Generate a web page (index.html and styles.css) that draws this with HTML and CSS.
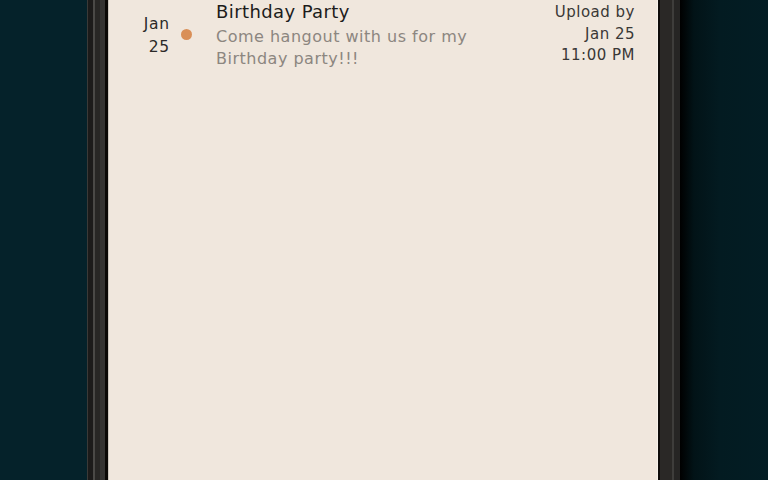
FILE: index.html
```html
<!DOCTYPE html>
<html>
<head>
<meta charset="utf-8">
<link rel="stylesheet" href="styles.css">
</head>
<body>
<div class="stage">
  <div class="side left"></div>
  <div class="phone">
    <div class="bezel bezel-left"></div>
    <div class="screen">
      <div class="event">
        <div class="date">
          <span>Jan</span>
          <span>25</span>
        </div>
        <div class="dot-col"><span class="dot"></span></div>
        <div class="info">
          <div class="title">Birthday Party</div>
          <div class="desc">Come hangout with us for my Birthday party!!!</div>
        </div>
        <div class="meta">
          <span>Upload by</span>
          <span>Jan 25</span>
          <span>11:00 PM</span>
        </div>
      </div>
    </div>
    <div class="bezel bezel-right"></div>
  </div>
  <div class="side right"></div>
</div>
</body>
</html>
```
FILE: styles.css
```css
html, body {
  margin: 0;
  padding: 0;
  width: 768px;
  height: 480px;
  overflow: hidden;
  background: #04212a;
}
.stage {
  display: flex;
  height: 480px;
}
.side.left {
  width: 87px;
  background: #05222a;
}
.side.right {
  flex: 1;
  background: linear-gradient(90deg, #000 0px, #021317 14px, #031b21 40px, #031d24 100%);
}
.phone {
  display: flex;
  width: 593px;
}
.bezel-left {
  width: 22px;
  background: linear-gradient(90deg,
    #3b3a38 0, #3b3a38 1px,
    #1c1b1a 1px, #1c1b1a 6px,
    #4a4946 6px, #4a4946 8px,
    #282725 8px, #282725 13px,
    #353432 13px, #353432 18px,
    #0b0906 18px, #0b0906 21px,
    #cfc8bf 21px, #cfc8bf 22px);
}
.bezel-right {
  width: 23px;
  background: linear-gradient(90deg,
    #f6f1ea 0, #f6f1ea 1px,
    #0e0c0a 1px, #0e0c0a 3px,
    #2a2826 3px, #2a2826 15px,
    #3e3d3b 15px, #3e3d3b 17px,
    #262524 17px, #262524 23px);
}
.screen {
  width: 548px;
  background: #f0e7dd;
  font-family: "DejaVu Sans", "Noto Sans", sans-serif;
}
.event {
  display: flex;
  align-items: flex-start;
  padding: 0 22px 0 0;
}
.date {
  width: 61px;
  display: flex;
  flex-direction: column;
  align-items: flex-end;
  padding-top: 13px;
  font-size: 15.5px;
  line-height: 23px;
  letter-spacing: 0.8px;
  color: #2b2a28;
}
.dot-col {
  width: 46px;
  display: flex;
  padding-left: 11px;
  box-sizing: border-box;
  padding-top: 29px;
}
.dot {
  width: 11px;
  height: 11px;
  border-radius: 50%;
  background: #d98f57;
}
.info {
  flex: 1;
}
.title {
  font-size: 18px;
  line-height: 24px;
  letter-spacing: 0.4px;
  color: #1d1c1b;
}
.desc {
  width: 300px;
  font-size: 16px;
  line-height: 22px;
  letter-spacing: 0.5px;
  color: #8c8680;
  margin-top: 2px;
}
.meta {
  display: flex;
  flex-direction: column;
  align-items: flex-end;
  font-size: 15px;
  line-height: 21.5px;
  letter-spacing: 0.5px;
  color: #3a3836;
  padding-top: 2px;
}
```
